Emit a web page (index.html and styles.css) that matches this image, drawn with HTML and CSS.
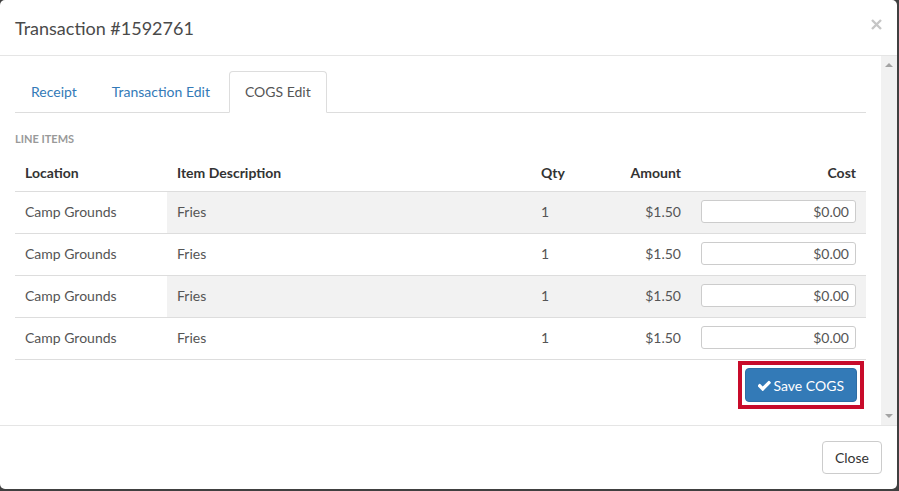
FILE: index.html
```html
<!DOCTYPE html>
<html lang="en">
<head>
    <meta charset="UTF-8">
    <title>Transaction #1592761</title>
    <link rel="stylesheet" href="styles.css">
</head>
<body>
    <div class="modal">
        <div class="modal-header">
            <h4 class="modal-title">Transaction #1592761</h4>
            <button class="close" aria-label="Close">
                <svg width="11" height="11" viewBox="0 0 11 11"><path d="M1 1L10 10M10 1L1 10" stroke="#c6c6c6" stroke-width="2.4" fill="none"/></svg>
            </button>
        </div>

        <div class="modal-body">
            <div class="body-content">
                <ul class="nav-tabs">
                    <li><a href="#">Receipt</a></li>
                    <li><a href="#">Transaction Edit</a></li>
                    <li class="active"><a href="#">COGS Edit</a></li>
                </ul>

                <div class="section-label">LINE ITEMS</div>

                <table class="line-items">
                    <colgroup>
                        <col class="col-loc">
                        <col class="col-desc">
                        <col class="col-qty">
                        <col class="col-amount">
                        <col class="col-cost">
                    </colgroup>
                    <thead>
                        <tr>
                            <th>Location</th>
                            <th>Item Description</th>
                            <th>Qty</th>
                            <th class="right">Amount</th>
                            <th class="right">Cost</th>
                        </tr>
                    </thead>
                    <tbody>
                        <tr class="striped">
                            <td class="loc">Camp Grounds</td>
                            <td>Fries</td>
                            <td>1</td>
                            <td class="right">$1.50</td>
                            <td class="right"><input class="cost-input" type="text" value="$0.00"></td>
                        </tr>
                        <tr>
                            <td class="loc">Camp Grounds</td>
                            <td>Fries</td>
                            <td>1</td>
                            <td class="right">$1.50</td>
                            <td class="right"><input class="cost-input" type="text" value="$0.00"></td>
                        </tr>
                        <tr class="striped">
                            <td class="loc">Camp Grounds</td>
                            <td>Fries</td>
                            <td>1</td>
                            <td class="right">$1.50</td>
                            <td class="right"><input class="cost-input" type="text" value="$0.00"></td>
                        </tr>
                        <tr>
                            <td class="loc">Camp Grounds</td>
                            <td>Fries</td>
                            <td>1</td>
                            <td class="right">$1.50</td>
                            <td class="right"><input class="cost-input" type="text" value="$0.00"></td>
                        </tr>
                    </tbody>
                </table>

                <div class="save-row">
                    <div class="highlight">
                        <button class="btn btn-primary">
                            <svg class="check" width="13" height="11" viewBox="160 420 1520 940"><path fill="#fff" d="M1671 566q0 40-28 68l-724 724-136 136q-28 28-68 28t-68-28l-136-136-362-362q-28-28-28-68t28-68l136-136q28-28 68-28t68 28l294 295 656-657q28-28 68-28t68 28l136 136q28 28 28 68z"/></svg>
                            <span>Save COGS</span>
                        </button>
                    </div>
                </div>
            </div>
            <div class="scrollbar">
                <span class="arrow-up"></span>
                <span class="arrow-down"></span>
            </div>
        </div>

        <div class="modal-footer">
            <button class="btn btn-default">Close</button>
        </div>
    </div>
</body>
</html>
```

FILE: styles.css
```css
body {
    margin: 0;
    background-color: #404040;
    font-family: Lato, 'Open Sans', sans-serif;
    font-size: 14px;
    color: #555;
}
.modal {
    width: 897px;
    height: 489px;
    background-color: #fff;
    border-radius: 5px;
    display: flex;
    flex-direction: column;
    overflow: hidden;
}
.modal-header {
    height: 55px;
    padding: 0 15px;
    border-bottom: 1px solid #e5e5e5;
    display: flex;
    align-items: center;
    justify-content: space-between;
    flex-shrink: 0;
}
.modal-title {
    margin: 0;
    font-size: 18px;
    font-weight: normal;
    color: #4a4a4a;
    padding-top: 1px;
}
.close {
    background: none;
    border: none;
    padding: 0;
    margin-top: -7px;
    cursor: pointer;
    display: flex;
}
.modal-body {
    flex: 1;
    display: flex;
    min-height: 0;
}
.body-content {
    flex: 1;
    padding: 15px;
}
.scrollbar {
    width: 16px;
    background-color: #f1f1f1;
    display: flex;
    flex-direction: column;
    justify-content: space-between;
    align-items: center;
    padding: 7px 0;
}
.arrow-up,
.arrow-down {
    width: 0;
    height: 0;
    border-left: 4px solid transparent;
    border-right: 4px solid transparent;
}
.arrow-up {
    border-bottom: 4px solid #a3a3a3;
}
.arrow-down {
    border-top: 4px solid #a3a3a3;
}
.nav-tabs {
    list-style: none;
    margin: 0;
    padding: 0;
    display: flex;
    gap: 3px;
    border-bottom: 1px solid #ddd;
    height: 41px;
}
.nav-tabs li {
    margin-bottom: -1px;
}
.nav-tabs a {
    display: block;
    line-height: 40px;
    padding: 0 15px;
    border: 1px solid transparent;
    border-radius: 4px 4px 0 0;
    color: #337ab7;
    text-decoration: none;
    box-sizing: border-box;
    height: 41px;
}
.nav-tabs .active a {
    color: #555;
    border-color: #ddd #ddd transparent;
    background-color: #fff;
    height: 42px;
}
.section-label {
    margin-top: 18px;
    font-size: 11px;
    font-weight: bold;
    line-height: 16px;
    color: #999;
}
.line-items {
    width: 100%;
    margin-top: 9px;
    border-collapse: separate;
    border-spacing: 0;
    table-layout: fixed;
}
.col-loc { width: 152px; }
.col-desc { width: 364px; }
.col-qty { width: 70px; }
.col-amount { width: 90px; }
.col-cost { width: 175px; }
.line-items th {
    text-align: left;
    font-weight: bold;
    color: #333;
    height: 36px;
    padding: 0 10px 3px;
    border-bottom: 1px solid #ddd;
    vertical-align: middle;
    box-sizing: border-box;
}
.line-items td {
    height: 42px;
    padding: 0 10px 3px;
    border-bottom: 1px solid #ddd;
    vertical-align: middle;
    box-sizing: border-box;
}
.line-items .right {
    text-align: right;
}
.line-items tr.striped td {
    background-color: #f2f2f2;
}
.line-items tr.striped td.loc {
    background-color: #fff;
}
.cost-input {
    width: 155px;
    height: 23px;
    box-sizing: border-box;
    border: 1px solid #ccc;
    border-radius: 3px;
    padding: 0 6px;
    text-align: right;
    font-family: Lato, 'Open Sans', sans-serif;
    font-size: 14px;
    color: #555;
    background-color: #fff;
    margin-top: 1px;
}
.save-row {
    display: flex;
    justify-content: flex-end;
    margin-top: 1px;
}
.highlight {
    border: 4px solid #c80b2a;
    padding: 3px;
    margin-right: 2px;
}
.btn {
    font-family: Lato, 'Open Sans', sans-serif;
    font-size: 14px;
    height: 34px;
    padding: 0 12px;
    border-radius: 4px;
    border: 1px solid transparent;
    cursor: pointer;
    display: flex;
    align-items: center;
    box-sizing: border-box;
    white-space: nowrap;
}
.btn-primary {
    background-color: #337ab7;
    border-color: #2e6da4;
    color: #fff;
    gap: 3px;
}
.btn-default {
    width: 60px;
    height: 33px;
    justify-content: center;
    background-color: #fff;
    border-color: #ccc;
    color: #333;
    margin-left: auto;
}
.modal-footer {
    border-top: 1px solid #e5e5e5;
    padding: 15px;
    display: flex;
}
```
